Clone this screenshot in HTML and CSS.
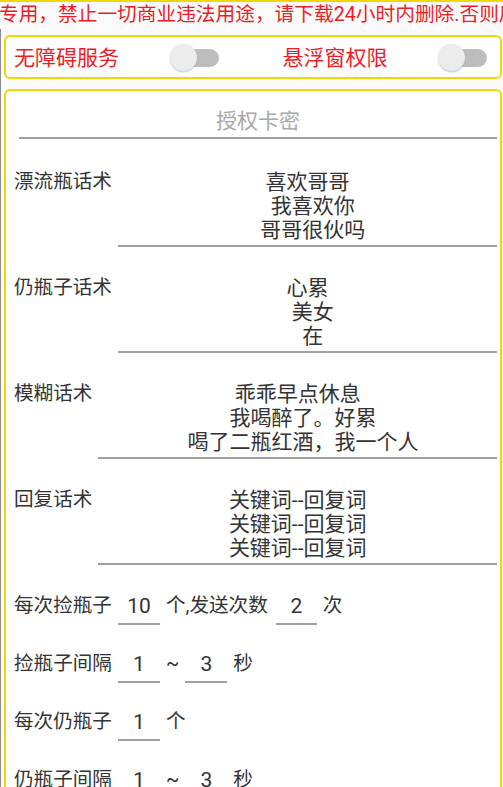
FILE: index.html
```html
<!DOCTYPE html>
<html lang="zh-CN">
<head>
<meta charset="utf-8">
<title>设置</title>
<link rel="stylesheet" href="styles.css">
</head>
<body>
<div class="topline"></div>
<div class="marquee">专用，禁止一切商业违法用途，请下载24小时内删除.否则后果自负。</div>
<div class="content">
  <div class="card perm-card">
    <span class="perm-title">无障碍服务</span>
    <span class="switch"><span class="track"></span><span class="thumb"></span></span>
    <span class="perm-title perm-title-2">悬浮窗权限</span>
    <span class="switch"><span class="track"></span><span class="thumb"></span></span>
  </div>
  <div class="card main-card">
    <div class="auth-field">授权卡密</div>
    <div class="row multi">
      <span class="label">漂流瓶话术</span>
      <div class="edit-multi">喜欢哥哥<br>&nbsp;&nbsp;我喜欢你<br>&nbsp;&nbsp;哥哥很伙吗</div>
    </div>
    <div class="row multi">
      <span class="label">仍瓶子话术</span>
      <div class="edit-multi">心累<br>&nbsp;&nbsp;美女<br>&nbsp;&nbsp;在</div>
    </div>
    <div class="row multi">
      <span class="label">模糊话术</span>
      <div class="edit-multi">乖乖早点休息<br>&nbsp;&nbsp;我喝醉了。好累<br>&nbsp;&nbsp;喝了二瓶红酒，我一个人</div>
    </div>
    <div class="row multi">
      <span class="label">回复话术</span>
      <div class="edit-multi">关键词--回复词<br>关键词--回复词<br>关键词--回复词</div>
    </div>
    <div class="row inline first-inline">
      <span class="label">每次捡瓶子</span>
      <span class="edit-small">10</span>
      <span class="label">个,发送次数</span>
      <span class="edit-small edit-wide-gap">2</span>
      <span class="label">次</span>
    </div>
    <div class="row inline">
      <span class="label">捡瓶子间隔</span>
      <span class="edit-small">1</span>
      <span class="label">~</span>
      <span class="edit-small">3</span>
      <span class="label">秒</span>
    </div>
    <div class="row inline">
      <span class="label">每次仍瓶子</span>
      <span class="edit-small">1</span>
      <span class="label">个</span>
    </div>
    <div class="row inline">
      <span class="label">仍瓶子间隔</span>
      <span class="edit-small">1</span>
      <span class="label">~</span>
      <span class="edit-small">3</span>
      <span class="label">秒</span>
    </div>
  </div>
</div>
</body>
</html>
```
FILE: styles.css
```css
html, body {
  margin: 0;
  padding: 0;
  height: 787px;
  overflow: hidden;
}
body {
  background: #fafafa;
  font-family: Roboto, "Noto Sans CJK SC", "Noto Sans", sans-serif;
  color: #333;
}
.topline {
  height: 2px;
  background: #f0d800;
}
.marquee {
  color: #ee1c25;
  font-size: 19.7px;
  line-height: 24px;
  padding: 1px 0 2px 0;
  margin-left: -1px;
  white-space: nowrap;
  overflow: hidden;
}
.content {
  border-left: 1px solid #8c8c8c;
  padding: 6px 1px 0 3px;
}
.card {
  background: #fff;
  border: 2px solid #f0d800;
  border-radius: 6px;
}
.perm-card {
  height: 40px;
  display: flex;
  align-items: center;
  padding: 0 13px 0 8px;
}
.perm-title {
  flex: 1;
  color: #ee1c25;
  font-size: 21px;
  line-height: 26px;
  white-space: nowrap;
  padding-top: 2px;
}
.perm-title-2 {
  margin-left: 64px;
}
.switch {
  position: relative;
  width: 49px;
  height: 27px;
  flex: none;
}
.track {
  position: absolute;
  left: 6px;
  top: 5px;
  width: 43px;
  height: 18px;
  border-radius: 9px;
  background: #bdbdbd;
}
.thumb {
  position: absolute;
  left: 0;
  top: 0;
  width: 27px;
  height: 27px;
  border-radius: 50%;
  background: #ececec;
  box-shadow: 0 1.5px 1px rgba(150, 180, 215, 0.55), 0 0 1px rgba(0, 0, 0, 0.15);
}
.main-card {
  margin-top: 10px;
  padding: 0 3px 40px 8px;
  border-bottom-left-radius: 0;
  border-bottom-right-radius: 0;
}
.auth-field {
  margin: 15px 0 0 5px;
  font-size: 21px;
  line-height: 30px;
  color: #a8a8a8;
  text-align: center;
  padding-bottom: 1px;
  border-bottom: 2px solid #a0a0a0;
}
.row {
  display: flex;
  align-items: flex-start;
}
.multi {
  margin-top: 29px;
}
.auth-field + .row {
  margin-top: 31px;
}
.label {
  font-size: 19.6px;
  line-height: 24px;
  color: #333;
  white-space: nowrap;
}
.edit-multi {
  flex: 1;
  margin-left: 6px;
  font-size: 21px;
  line-height: 24px;
  color: #333;
  text-align: center;
  padding-bottom: 3px;
  border-bottom: 2px solid #a0a0a0;
}
.inline {
  margin-top: 27px;
}
.first-inline {
  margin-top: 29px;
}
.edit-small {
  width: 42px;
  margin: 0 6px;
  font-size: 21px;
  line-height: 24px;
  color: #333;
  text-align: center;
  padding-bottom: 5px;
  border-bottom: 2px solid #a0a0a0;
}
.edit-wide-gap {
  margin-left: 8px;
  width: 41px;
}
```
